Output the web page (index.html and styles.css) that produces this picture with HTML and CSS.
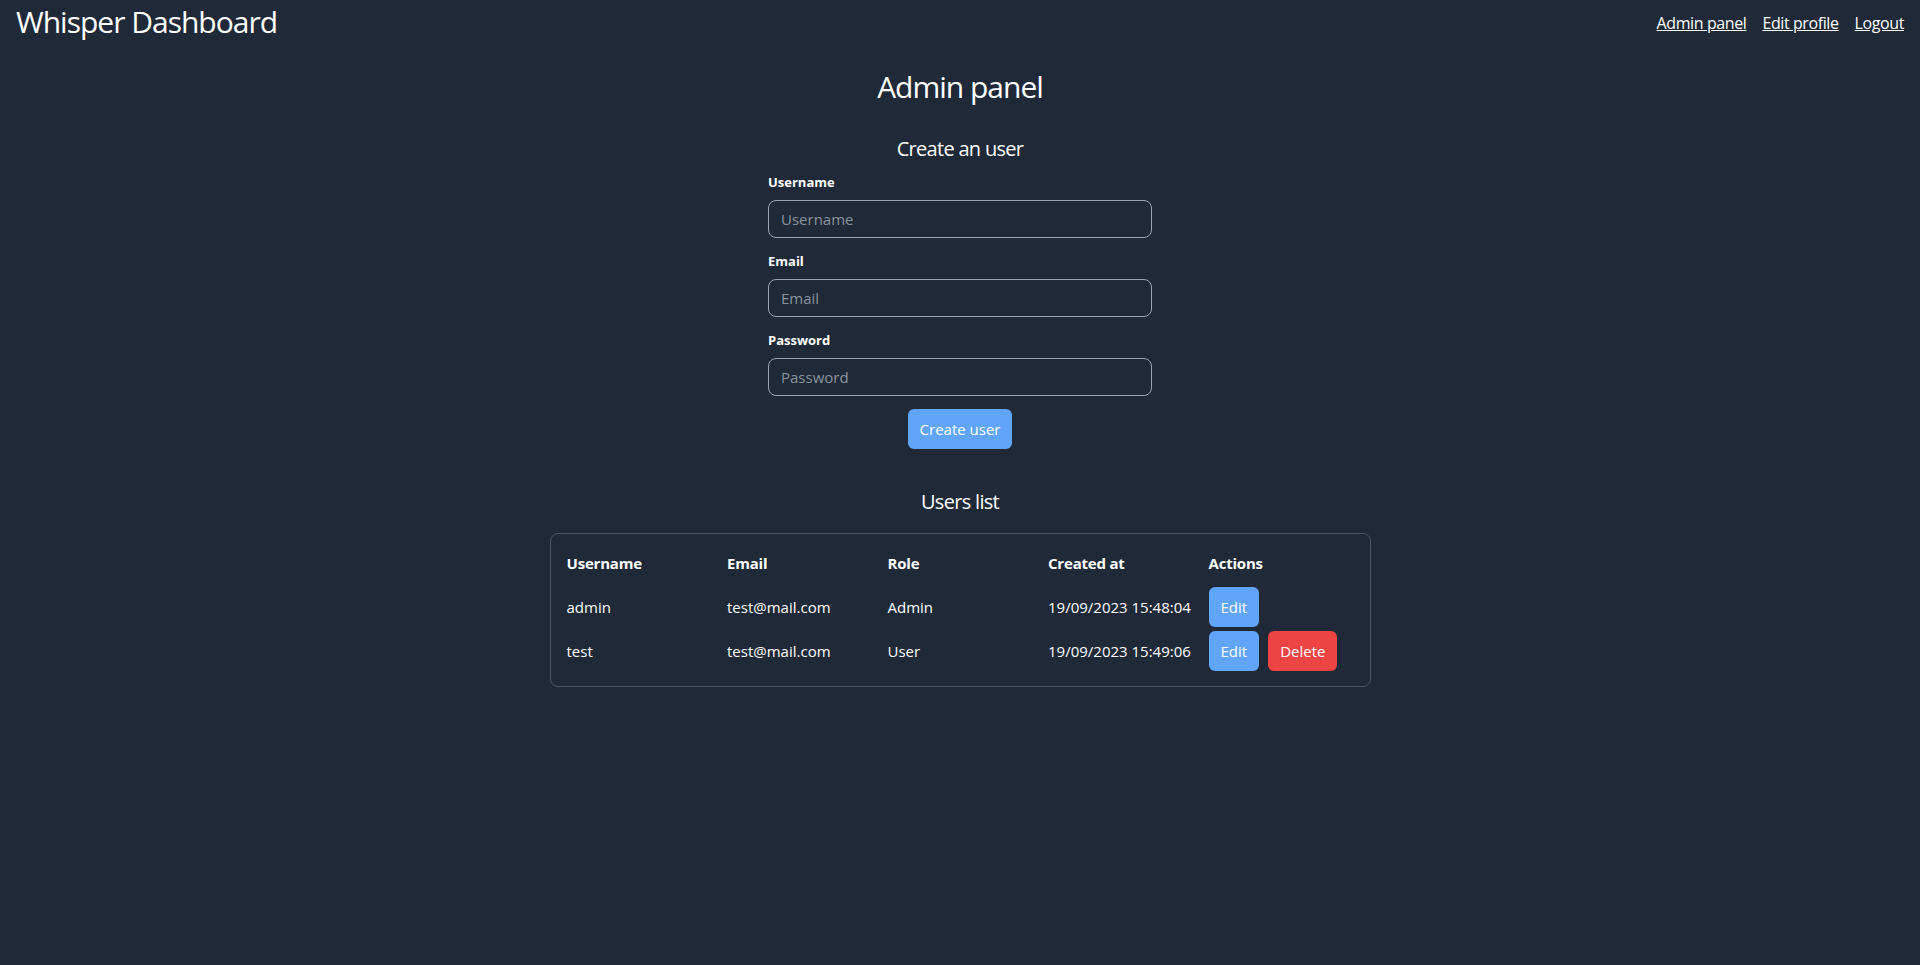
FILE: index.html
```html
<!DOCTYPE html>
<html lang="en">
<head>
<meta charset="utf-8">
<title>Whisper Dashboard</title>
<link rel="stylesheet" href="styles.css">
</head>
<body>
<header class="topbar">
  <div class="brand">Whisper Dashboard</div>
  <nav class="nav">
    <a href="#" class="nav-link">Admin panel</a>
    <a href="#" class="nav-link">Edit profile</a>
    <a href="#" class="nav-link">Logout</a>
  </nav>
</header>
<main class="main">
  <h1 class="page-title">Admin panel</h1>
  <section class="create">
    <h2 class="section-title">Create an user</h2>
    <form class="form">
      <div class="field">
        <label class="label" for="username">Username</label>
        <input class="input" id="username" type="text" placeholder="Username">
      </div>
      <div class="field">
        <label class="label" for="email">Email</label>
        <input class="input" id="email" type="email" placeholder="Email">
      </div>
      <div class="field">
        <label class="label" for="password">Password</label>
        <input class="input" id="password" type="password" placeholder="Password">
      </div>
      <div class="form-actions">
        <button type="button" class="btn btn-blue">Create user</button>
      </div>
    </form>
  </section>
  <section class="users">
    <h2 class="section-title users-title">Users list</h2>
    <div class="table-box">
      <table class="table">
        <thead>
          <tr>
            <th>Username</th>
            <th>Email</th>
            <th>Role</th>
            <th>Created at</th>
            <th class="col-actions">Actions</th>
          </tr>
        </thead>
        <tbody>
          <tr>
            <td>admin</td>
            <td>test@mail.com</td>
            <td>Admin</td>
            <td>19/09/2023 15:48:04</td>
            <td><div class="actions"><button type="button" class="btn btn-blue">Edit</button></div></td>
          </tr>
          <tr>
            <td>test</td>
            <td>test@mail.com</td>
            <td>User</td>
            <td>19/09/2023 15:49:06</td>
            <td><div class="actions"><button type="button" class="btn btn-blue">Edit</button><button type="button" class="btn btn-red">Delete</button></div></td>
          </tr>
        </tbody>
      </table>
    </div>
  </section>
</main>
</body>
</html>
```

FILE: styles.css
```css
* { box-sizing: border-box; }

html, body {
  margin: 0;
  padding: 0;
  background: #1f2937;
  min-height: 100%;
}

body {
  color: #ffffff;
  font-family: "Open Sans", "Noto Sans", "Liberation Sans", sans-serif;
  font-size: 16px;
  line-height: 24px;
}

.topbar {
  display: flex;
  justify-content: space-between;
  align-items: flex-start;
  padding: 4px 16px 0 16px;
}

.brand {
  font-size: 30px;
  line-height: 36px;
  letter-spacing: -1px;
}

.nav {
  display: flex;
  gap: 16px;
  margin-top: 7px;
}

.nav-link {
  color: #ffffff;
  text-decoration: underline;
  font-size: 16px;
  letter-spacing: -0.4px;
}

.main {
  display: flex;
  flex-direction: column;
  align-items: center;
}

.page-title {
  margin: 29px 0 0 0;
  font-size: 30px;
  line-height: 36px;
  font-weight: 400;
  letter-spacing: -1px;
}

.section-title {
  margin: 30px 0 0 0;
  font-size: 20px;
  line-height: 28px;
  font-weight: 400;
  text-align: center;
  letter-spacing: -0.7px;
}

.create {
  display: flex;
  flex-direction: column;
  align-items: center;
}

.form {
  width: 384px;
  margin-top: 9px;
  display: flex;
  flex-direction: column;
}

.field {
  display: flex;
  flex-direction: column;
  margin-bottom: 13px;
}

.label {
  font-size: 13px;
  line-height: 20px;
  font-weight: 700;
  margin-bottom: 8px;
}

.input {
  height: 38px;
  width: 100%;
  background: transparent;
  border: 1px solid #9ca3af;
  border-radius: 8px;
  padding: 0 12px;
  color: #ffffff;
  font-family: inherit;
  font-size: 15px;
  outline: none;
}

.input::placeholder {
  color: #8b929d;
  opacity: 1;
}

.form-actions {
  display: flex;
  justify-content: center;
  margin-top: 0;
}

.btn {
  height: 40px;
  padding: 0 12px;
  border: none;
  border-radius: 6px;
  color: #ffffff;
  font-family: inherit;
  font-size: 15px;
  line-height: 40px;
  cursor: pointer;
}

.btn-blue { background: #60a5fa; }
.btn-red { background: #ef4444; }

.users {
  display: flex;
  flex-direction: column;
  align-items: center;
}

.users-title {
  margin-top: 39px;
}

.table-box {
  margin-top: 17px;
  width: 821px;
  border: 1px solid #4b5563;
  border-radius: 8px;
  padding: 16px 16px 13px 16px;
}

.table {
  width: 100%;
  border-collapse: collapse;
  border-spacing: 0;
  table-layout: fixed;
}

.table th,
.table td {
  text-align: left;
  padding: 0;
  width: 160.5px;
  font-size: 15px;
}

.table th {
  font-weight: 700;
  padding: 1px 0 10px 0;
  line-height: 24px;
  letter-spacing: -0.2px;
}

.table td {
  padding: 2px 0;
  line-height: 40px;
  vertical-align: middle;
}

.table .col-actions { width: auto; }

.actions {
  display: flex;
  gap: 9px;
}
```
